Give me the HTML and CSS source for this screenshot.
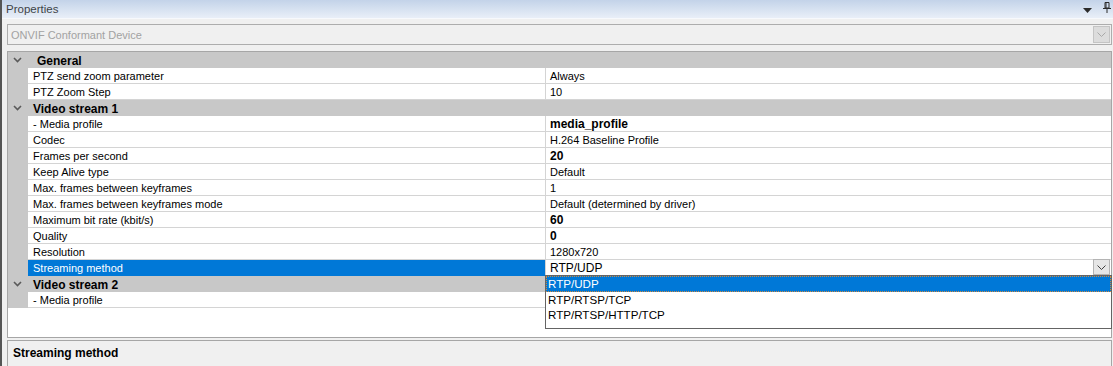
FILE: index.html
```html
<!DOCTYPE html>
<html>
<head>
<meta charset="utf-8">
<link rel="stylesheet" href="styles.css">
</head>
<body>
<div class="window">
  <div class="titlebar">
    <span class="title">Properties</span>
    <div class="tb-icons">
      <svg class="tb-arrow" width="9" height="5" viewBox="0 0 9 5"><path d="M0 0H9L4.5 5Z" fill="#2b2b2b"/></svg>
      <svg class="tb-pin" width="8" height="11" viewBox="0 0 8 11"><path d="M2 0.5H6V6H2Z M3 1V6" fill="none" stroke="#2b2b2b" stroke-width="1"/><path d="M0 6.5H8" stroke="#2b2b2b" stroke-width="1"/><path d="M4 7V11" stroke="#2b2b2b" stroke-width="1"/></svg>
    </div>
  </div>
  <div class="body">
    <div class="combo">
      <span class="combo-text">ONVIF Conformant Device</span>
      <span class="combo-btn"><svg width="9" height="5" viewBox="0 0 9 5"><path d="M0.5 0.5L4.5 4.5L8.5 0.5" fill="none" stroke="#a8a8a8" stroke-width="1"/></svg></span>
    </div>
    <div class="grid">
      <div class="row cat"><span class="margin"><svg class="chev" width="9" height="6" viewBox="0 0 9 6"><path d="M1 1L4.5 4.5L8 1" fill="none" stroke="#5a5a5a" stroke-width="1.6"/></svg></span><span class="cat-label first">General</span></div>
      <div class="row"><span class="margin"></span><span class="name">PTZ send zoom parameter</span><span class="value">Always</span></div>
      <div class="row"><span class="margin"></span><span class="name">PTZ Zoom Step</span><span class="value">10</span></div>
      <div class="row cat"><span class="margin"><svg class="chev" width="9" height="6" viewBox="0 0 9 6"><path d="M1 1L4.5 4.5L8 1" fill="none" stroke="#5a5a5a" stroke-width="1.6"/></svg></span><span class="cat-label">Video stream 1</span></div>
      <div class="row"><span class="margin"></span><span class="name">- Media profile</span><span class="value bold">media_profile</span></div>
      <div class="row"><span class="margin"></span><span class="name">Codec</span><span class="value">H.264 Baseline Profile</span></div>
      <div class="row"><span class="margin"></span><span class="name">Frames per second</span><span class="value bold">20</span></div>
      <div class="row"><span class="margin"></span><span class="name">Keep Alive type</span><span class="value">Default</span></div>
      <div class="row"><span class="margin"></span><span class="name">Max. frames between keyframes</span><span class="value">1</span></div>
      <div class="row"><span class="margin"></span><span class="name">Max. frames between keyframes mode</span><span class="value">Default (determined by driver)</span></div>
      <div class="row"><span class="margin"></span><span class="name">Maximum bit rate (kbit/s)</span><span class="value bold">60</span></div>
      <div class="row"><span class="margin"></span><span class="name">Quality</span><span class="value bold">0</span></div>
      <div class="row"><span class="margin"></span><span class="name">Resolution</span><span class="value">1280x720</span></div>
      <div class="row selected"><span class="margin"></span><span class="name">Streaming method</span><span class="value edit"><span class="edit-text">RTP/UDP</span><span class="edit-btn"><svg width="9" height="5" viewBox="0 0 9 5"><path d="M0.5 0.5L4.5 4.5L8.5 0.5" fill="none" stroke="#404040" stroke-width="1"/></svg></span></span></div>
      <div class="row cat"><span class="margin"><svg class="chev" width="9" height="6" viewBox="0 0 9 6"><path d="M1 1L4.5 4.5L8 1" fill="none" stroke="#5a5a5a" stroke-width="1.6"/></svg></span><span class="cat-label">Video stream 2</span></div>
      <div class="row"><span class="margin"></span><span class="name">- Media profile</span><span class="value"></span></div>
    </div>
    <div class="desc"><span class="desc-title">Streaming method</span></div>
  </div>
  <div class="dropdown">
    <div class="item active">RTP/UDP</div>
    <div class="item">RTP/RTSP/TCP</div>
    <div class="item">RTP/RTSP/HTTP/TCP</div>
  </div>
</div>
</body>
</html>
```
FILE: styles.css
```css
html, body {
  margin: 0;
  padding: 0;
  background: #f0f0f0;
  font-family: "Liberation Sans", Arial, sans-serif;
  font-size: 11px;
  color: #000;
  overflow: hidden;
}

.window {
  position: relative;
  width: 1111px;
  height: 366px;
  border-left: 2px solid #555555;
  display: flex;
  flex-direction: column;
}

.titlebar {
  height: 18px;
  flex: none;
  background: linear-gradient(#c3d3e9, #e9eff8);
  border-bottom: 1px solid #f7f9fc;
  display: flex;
  align-items: center;
  justify-content: space-between;
  padding-left: 4px;
  padding-right: 2px;
}

.title {
  color: #404348;
  font-size: 11.5px;
  line-height: 18px;
}

.tb-icons {
  display: flex;
  align-items: center;
  gap: 11px;
  height: 18px;
}

.tb-arrow {
  margin-top: 2px;
}

.tb-pin {
  margin-top: -4px;
}

.body {
  flex: 1;
  display: flex;
  flex-direction: column;
  padding: 5px 1px 0 5px;
}

.combo {
  height: 21px;
  box-sizing: border-box;
  border: 1px solid #adadad;
  background: #f0f0f0;
  display: flex;
  align-items: center;
  justify-content: space-between;
  padding-left: 3px;
  padding-right: 1px;
}

.combo-text {
  color: #a2a2a2;
}

.combo-btn {
  width: 17px;
  height: 17px;
  box-sizing: border-box;
  border: 1px solid #c4c4c4;
  background: #dcdcdc;
  display: flex;
  align-items: center;
  justify-content: center;
}

.grid {
  margin-top: 6px;
  height: 287px;
  box-sizing: border-box;
  border: 1px solid #a6a6a6;
  background: #fff;
  display: flex;
  flex-direction: column;
}

.row {
  height: 16px;
  flex: none;
  display: flex;
  box-sizing: border-box;
}

.margin {
  width: 20px;
  flex: none;
  background: #c8c8c8;
  display: flex;
  align-items: center;
  justify-content: center;
}

.chev {
  margin-left: -2px;
  margin-top: 0;
}

.name {
  width: 518px;
  flex: none;
  box-sizing: border-box;
  border-right: 1px solid #d4d4d4;
  border-bottom: 1px solid #d4d4d4;
  padding-left: 5px;
  padding-top: 1px;
  line-height: 14px;
  white-space: nowrap;
}

.value {
  flex: 1;
  box-sizing: border-box;
  border-bottom: 1px solid #d4d4d4;
  padding-left: 4px;
  padding-top: 1px;
  line-height: 14px;
  white-space: nowrap;
}

.value.bold {
  font-weight: bold;
  font-size: 12px;
}

.cat {
  background: #c8c8c8;
}

.cat-label {
  font-weight: bold;
  font-size: 12px;
  line-height: 16px;
  padding-top: 1px;
  padding-left: 5px;
}

.cat-label.first {
  padding-left: 9px;
}

.selected .name {
  background: #0078d7;
  color: #fff;
  border-bottom-color: #0078d7;
}

.value.edit {
  display: flex;
  justify-content: space-between;
  padding-right: 1px;
  padding-top: 0;
}

.edit-text {
  font-size: 12px;
  line-height: 16px;
}

.edit-btn {
  width: 17px;
  height: 16px;
  margin-top: -1px;
  box-sizing: border-box;
  border: 1px solid #b4b4b4;
  background: #e6e6e6;
  display: flex;
  align-items: center;
  justify-content: center;
}

.desc {
  margin-top: 2px;
  flex: 1;
  border: 1px solid #a6a6a6;
  border-bottom: none;
  background: #f0f0f0;
  padding: 5px 5px 0 5px;
}

.desc-title {
  font-weight: bold;
  font-size: 12px;
}

.dropdown {
  position: absolute;
  left: 543px;
  top: 275px;
  width: 567px;
  height: 54px;
  box-sizing: border-box;
  border: 1px solid #646464;
  background: #fff;
  font-size: 11.6px;
}

.item {
  height: 15px;
  line-height: 15px;
  padding-left: 2px;
  white-space: nowrap;
}

.item.active {
  height: 16px;
  line-height: 16px;
  background: #0078d7;
  color: #fff;
  outline: 1px dotted #d08a40;
  outline-offset: -1px;
}
```
